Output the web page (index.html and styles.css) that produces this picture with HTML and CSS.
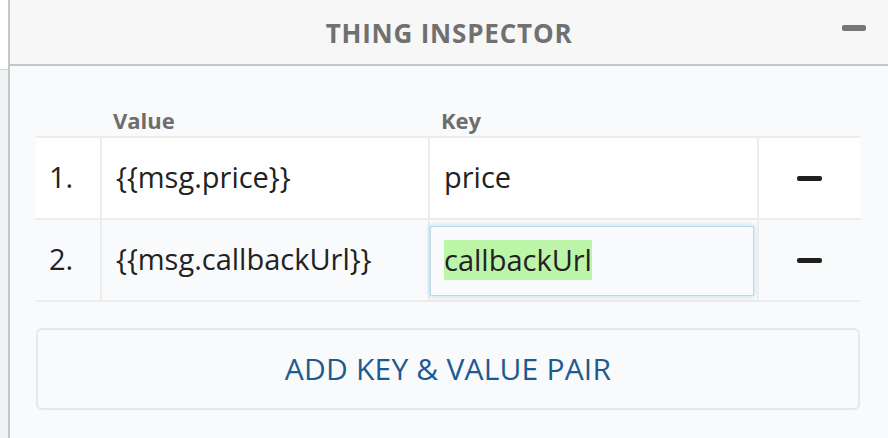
FILE: index.html
```html
<!DOCTYPE html>
<html>
<head>
<meta charset="utf-8">
<link rel="stylesheet" href="styles.css">
</head>
<body>
<div class="page">
  <div class="side">
    <div class="side-top"></div>
    <div class="side-bottom"></div>
  </div>
  <div class="panel">
    <div class="panel-head">
      <div class="title">THING INSPECTOR</div>
      <div class="collapse"></div>
    </div>
    <div class="panel-body">
      <div class="grid">
        <div class="hcell"></div>
        <div class="hcell label">Value</div>
        <div class="hcell label">Key</div>
        <div class="hcell"></div>

        <div class="cell num r1">1.</div>
        <div class="cell val r1">{{msg.price}}</div>
        <div class="cell key r1">price</div>
        <div class="cell act r1"><span class="minus"></span></div>

        <div class="cell num r2">2.</div>
        <div class="cell val r2">{{msg.callbackUrl}}</div>
        <div class="cell key r2"><div class="input"><span class="sel">callbackUrl</span></div></div>
        <div class="cell act r2"><span class="minus"></span></div>
      </div>
      <div class="add">ADD KEY &amp; VALUE PAIR</div>
    </div>
  </div>
</div>
</body>
</html>
```

FILE: styles.css
```css
* { box-sizing: border-box; }
html, body { margin: 0; padding: 0; }
body {
  width: 888px;
  height: 438px;
  overflow: hidden;
  font-family: "Open Sans", "Noto Sans", sans-serif;
  background: #f9fafb;
}
.page {
  display: flex;
  height: 438px;
}
.side {
  width: 8px;
  display: flex;
  flex-direction: column;
}
.side-top { height: 70px; background: #ffffff; border-bottom: 1px solid #d6d9db; }
.side-bottom { flex: 1; background: #eef2f3; }
.panel {
  flex: 1;
  border-left: 2px solid #c6c6c6;
  display: flex;
  flex-direction: column;
}
.panel-head {
  height: 66px;
  background: #f7f7f7;
  border-bottom: 2px solid #c6c6c6;
  display: flex;
  align-items: center;
  justify-content: center;
  position: relative;
}
.title {
  font-weight: 700;
  font-size: 26px;
  letter-spacing: 0.8px;
  color: #707070;
  margin-top: 1px;
}
.collapse {
  position: absolute;
  right: 22px;
  top: 25px;
  width: 24px;
  height: 6px;
  border-radius: 2px;
  background: #777777;
}
.panel-body {
  flex: 1;
  padding: 38px 18px 0 26px;
}
.grid {
  display: grid;
  grid-template-columns: 64px 328px 329px 103px;
  grid-template-rows: 34px 82px 82px;
  width: 824px;
}
.hcell {
  font-size: 22px;
  font-weight: 700;
  color: #6e6e6e;
  border-bottom: 2px solid #ececec;
  padding-left: 13px;
  line-height: 32px;
}
.cell {
  border-bottom: 2px solid #ececec;
  display: flex;
  align-items: center;
  font-size: 29px;
  color: #222;
}
.r1 { background: #ffffff; }
.r2 { background: #f9fafb; }
.num { padding-left: 13px; padding-bottom: 4px; }
.val { padding-left: 14px; border-left: 2px solid #ececec; padding-bottom: 4px; }
.r1.key { border-left: 2px solid #ececec; padding-left: 14px; padding-bottom: 4px; }
.r2.key { border-left: 2px solid #ececec; padding: 6px 3px 4px 0; }
.act { border-left: 2px solid #ececec; justify-content: center; }
.minus {
  width: 25px;
  height: 5px;
  border-radius: 2px;
  background: #1f1f1f;
}
.input {
  width: 100%;
  height: 100%;
  border: 1px solid #b7dbe9;
  background: #f8fafc;
  box-shadow: 0 0 5px rgba(120, 190, 220, 0.55);
  display: flex;
  align-items: center;
  padding-left: 13px;
  padding-bottom: 2px;
}
.sel { background: #bcf4a8; line-height: 40px; }
.add {
  margin-top: 26px;
  width: 824px;
  height: 82px;
  border: 2px solid #e6e8ea;
  border-radius: 6px;
  display: flex;
  align-items: center;
  justify-content: center;
  color: #1d5a92;
  font-size: 30px;
  font-weight: 400;
  letter-spacing: 0.2px;
  padding-bottom: 2px;
}
```
